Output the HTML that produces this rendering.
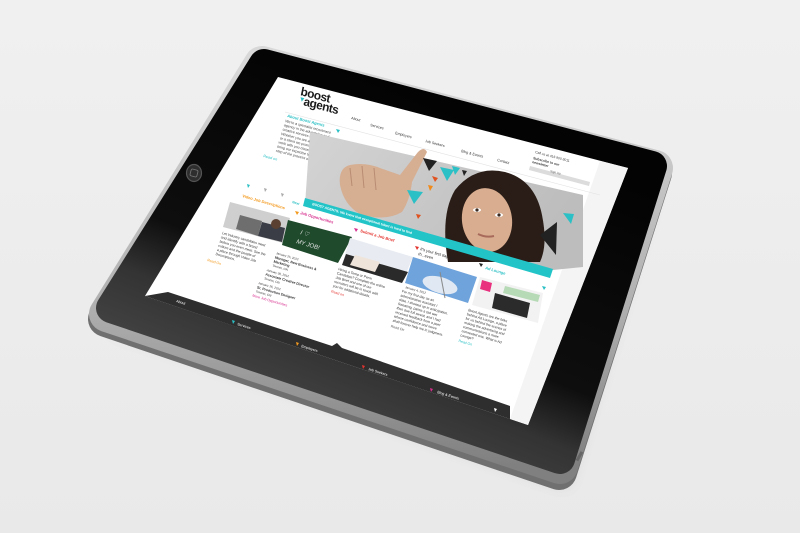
<!DOCTYPE html>
<html><head><meta charset="utf-8"><style>
html,body{margin:0;padding:0;width:800px;height:533px;overflow:hidden;background:#ededed}
svg{display:block}
text{font-family:"Liberation Sans",sans-serif}
</style></head><body>
<svg width="800" height="533" viewBox="0 0 800 533" xmlns="http://www.w3.org/2000/svg">
<defs>
<linearGradient id="bg" x1="0" y1="0" x2="0" y2="1"><stop offset="0" stop-color="#f0f0f0"/><stop offset="1" stop-color="#e9e9e9"/></linearGradient>
<linearGradient id="bez" x1="0.15" y1="0.9" x2="0.6" y2="0.1"><stop offset="0" stop-color="#4e4e4e"/><stop offset="0.3" stop-color="#333"/><stop offset="0.45" stop-color="#0e0e0e"/><stop offset="1" stop-color="#030303"/></linearGradient>
<linearGradient id="rim" x1="0" y1="0" x2="0" y2="1"><stop offset="0" stop-color="#d8d8d8"/><stop offset="0.6" stop-color="#b0b0b0"/><stop offset="1" stop-color="#808080"/></linearGradient>
<linearGradient id="hero" x1="0" y1="0" x2="1" y2="0.4"><stop offset="0" stop-color="#d4d4d4"/><stop offset="1" stop-color="#bdbdbd"/></linearGradient>
<filter id="blur"><feGaussianBlur stdDeviation="8"/></filter>
</defs>
<rect width="800" height="533" fill="url(#bg)"/>
<!-- shadow -->
<polygon points="262,70 655,175 565,478 110,322" fill="#000" opacity="0.12" filter="url(#blur)" transform="translate(2,8)"/>
<!-- tablet thickness -->
<polygon points="263,63 656,167 561,466 108,313" fill="#6a6a6a" stroke="#707070" stroke-width="36" stroke-linejoin="round" transform="translate(-2,6)"/>
<polygon points="263,62 656,166 561,464 108,312" fill="#c8c8c8" stroke="url(#rim)" stroke-width="36" stroke-linejoin="round" transform="translate(-1,2)"/>
<!-- bezel -->
<polygon points="264,64 652,166 560,459 111,308" fill="url(#bez)" stroke="url(#bez)" stroke-width="30" stroke-linejoin="round"/>
<!-- home button -->
<ellipse cx="194" cy="173" rx="7.5" ry="8.5" fill="#2e2e2e" stroke="#555" stroke-width="1.2"/>
<rect x="190.5" y="169.5" width="7" height="7" rx="1.5" fill="none" stroke="#777" stroke-width="0.8" transform="rotate(15 194 173)"/>
<!-- side buttons -->
<rect x="574" y="455" width="10" height="3" fill="#666" transform="rotate(-60 579 456)"/>
<!-- screen -->
<polygon points="278,77 628,168 528,425 145,296" fill="#ffffff"/>
<polygon points="600,161 628,168 528,425 510,419" fill="#f4f4f4"/>

<!-- logo -->
<g transform="matrix(0.967,0.254,-0.2,0.98,300,95)">
<text x="0" y="0" font-size="12" font-weight="bold" fill="#1a1a1a" letter-spacing="-0.5">boost</text>
<text x="5" y="9" font-size="12" font-weight="bold" fill="#1a1a1a" letter-spacing="-0.5">agents</text>
<polygon points="1,2 5,2 3,6" fill="#2bc0c5"/>
</g>
<!-- nav -->
<g font-size="3.6" fill="#333">
<text transform="matrix(0.967,0.254,-0.25,0.97,351,119)">About</text>
<text transform="matrix(0.967,0.254,-0.25,0.97,370,126)">Services</text>
<text transform="matrix(0.967,0.254,-0.25,0.97,395,134)">Employers</text>
<text transform="matrix(0.967,0.254,-0.25,0.97,425,142)">Job Seekers</text>
<text transform="matrix(0.967,0.254,-0.25,0.97,461,152)">Blog &amp; Events</text>
<text transform="matrix(0.967,0.254,-0.25,0.97,497,161)">Contact</text>
</g>
<line x1="285" y1="112" x2="600" y2="195" stroke="#e2e2e2" stroke-width="0.6"/>
<g font-size="3.4" fill="#444">
<text transform="matrix(0.967,0.254,-0.25,0.97,535,153)">Call us at 416 900 8011</text>
<text transform="matrix(0.967,0.254,-0.25,0.97,533,159)" font-weight="bold">Subscribe to our</text>
<text transform="matrix(0.967,0.254,-0.25,0.97,532,163)" font-weight="bold">newsletter</text>
</g>
<polygon points="530,166 590,182 589,186 529,170" fill="#dcdcdc"/>
<text transform="matrix(0.967,0.254,-0.25,0.97,550,172)" font-size="3" fill="#666">Sign Up</text>

<!-- left column -->
<text transform="matrix(0.967,0.254,-0.3,0.95,287,117)" font-size="4" font-weight="bold" fill="#2bc0c5">About Boost Agents</text>
<text transform="matrix(0.967,0.254,-0.3,0.95,285,122)" font-size="3.6" fill="#444">
<tspan x="0" dy="0">We're a specialist recruitment</tspan><tspan x="0" dy="4.4">agency in the advertising and</tspan><tspan x="0" dy="4.4">creative services industry.</tspan><tspan x="0" dy="4.8">Whether you are a candidate</tspan><tspan x="0" dy="4.4">or a client we promise to</tspan><tspan x="0" dy="4.4">work with you closely and</tspan><tspan x="0" dy="4.4">bring our expertise to every</tspan><tspan x="0" dy="4.4">step of the process with you.</tspan></text>
<text transform="matrix(0.967,0.254,-0.3,0.95,263,157)" font-size="3.8" fill="#2bc0c5">Read on</text>
<polygon points="336,129 340,130 338,133" fill="#2bc0c5"/>

<!-- hero -->
<polygon points="310,132 583,195 583,267 553,270 305,205" fill="url(#hero)"/>
<!-- hand -->
<path d="M340,185 Q338,168 350,165 Q365,162 380,168 L400,175 L418,152 Q424,146 427,152 L412,182 Q410,200 402,212 Q385,222 360,214 Q344,205 340,185 Z" fill="#d6ae92"/>
<path d="M350,168 L352,186 M362,166 L364,188 M374,168 L376,190" stroke="#b88c72" stroke-width="1" fill="none"/>
<!-- woman -->
<path d="M448,262 Q440,215 455,190 Q475,165 505,172 Q535,180 542,215 Q548,245 540,262 Z" fill="#2a1d17"/>
<ellipse cx="487" cy="220" rx="25" ry="32" fill="#d9ad90" transform="rotate(-8 487 220)"/>
<path d="M462,200 Q480,180 512,192 L510,185 Q490,172 465,185 Z" fill="#2a1d17"/>
<ellipse cx="477" cy="210" rx="4" ry="2" fill="#fff"/><circle cx="477" cy="210" r="1.6" fill="#3a2a20"/>
<ellipse cx="499" cy="215" rx="4" ry="2" fill="#fff"/><circle cx="499" cy="215" r="1.6" fill="#3a2a20"/>
<path d="M478,234 Q486,238 494,236" stroke="#a86a5a" stroke-width="2" fill="none"/>
<!-- triangles -->
<polygon points="407,190 423,192 414,204" fill="#2bc0c5"/>
<polygon points="440,167 454,170 447,181" fill="#2bc0c5"/>
<polygon points="423,158 437,161 429,171" fill="#222"/>
<polygon points="452,166 460,168 455,175" fill="#2bc0c5"/>
<polygon points="432,176 438,178 435,182" fill="#e0521f"/>
<polygon points="428,185 433,186 430,191" fill="#f08a1a"/>
<polygon points="462,170 467,171 464,176" fill="#222"/>
<polygon points="563,213 574,214 571,224" fill="#2bc0c5"/>
<polygon points="540,235 557,222 556,255" fill="#222"/>
<polygon points="416,214 421,215 418,219" fill="#e0521f"/>
<!-- teal band -->
<polygon points="305,198 553,269 550,278 303,206" fill="#22c4c8"/>
<text transform="matrix(0.96,0.28,-0.28,0.96,312,205)" font-size="3.4" font-weight="bold" fill="#fff">BOOST AGENTS: We know that exceptional talent is hard to find</text>

<!-- small nav arrows -->
<polygon points="247,184 250,185 248,188" fill="#2bc0c5"/>
<polygon points="264,188 267,189 265,192" fill="#aaa"/>
<polygon points="281,193 284,194 282,197" fill="#aaa"/>
<!-- section headings -->
<g font-size="4" font-weight="bold">
<text transform="matrix(0.96,0.28,-0.3,0.95,242,197)" fill="#f39a1e">Video Job Descriptions</text>
<text transform="matrix(0.96,0.28,-0.3,0.95,292,203)" fill="#2bc0c5" font-size="3.4">Next</text>
<text transform="matrix(0.96,0.28,-0.3,0.95,300,214)" fill="#d62f8e">Job Opportunities</text>
<text transform="matrix(0.96,0.28,-0.3,0.95,360,232)" fill="#e3342f">Submit a Job Brief</text>
<text transform="matrix(0.96,0.28,-0.3,0.95,420,250)" fill="#222" font-weight="normal">It's your first day. As</text>
<text transform="matrix(0.96,0.28,-0.3,0.95,418,255)" fill="#222" font-weight="normal">th...even</text>
<text transform="matrix(0.96,0.28,-0.3,0.95,485,269)" fill="#2bc0c5">Ad Lounge</text>
</g>
<polygon points="295,211 299,212 297,215" fill="#f39a1e"/>
<polygon points="354,228 358,229 356,232" fill="#d62f8e"/>
<polygon points="415,246 419,247 417,250" fill="#e3342f"/>
<polygon points="479,263 483,264 481,267" fill="#222"/>
<polygon points="542,286 546,287 544,290" fill="#2bc0c5"/>

<!-- photos -->
<polygon points="230,202 290,218 283,243 223,227" fill="#cfcfcf"/>
<polygon points="240,215 262,221 258,236 236,229" fill="#6e6e6e"/>
<polygon points="262,222 285,228 282,242 258,236" fill="#3a3d45"/>
<circle cx="276" cy="224" r="5" fill="#5a4030"/>
<polygon points="288,220 352,237 338,263 282,245" fill="#1f4a2c"/>
<text transform="matrix(0.96,0.28,-0.3,0.95,300,234)" font-size="6" fill="#e8e8e8" font-style="italic">I ♡</text>
<text transform="matrix(0.96,0.28,-0.3,0.95,296,243)" font-size="6" fill="#e8e8e8" font-style="italic">MY JOB!</text>
<polygon points="350,238 413,257 402,283 342,265" fill="#e8ecf2"/>
<polygon points="346,254 408,272 402,283 342,265" fill="#2a2a2a"/>
<polygon points="355,255 380,262 375,272 350,265" fill="#efe4da"/>
<polygon points="413,257 477,277 468,303 405,283" fill="#6fa3db"/>
<ellipse cx="440" cy="285" rx="18" ry="8" fill="#dfe8f3" transform="rotate(16 440 285)"/>
<line x1="440" y1="272" x2="445" y2="298" stroke="#888" stroke-width="1"/>
<polygon points="480,277 543,293 538,323 472,305" fill="#f2f2f2"/>
<polygon points="482,280 492,283 490,292 480,289" fill="#e8307e"/>
<polygon points="495,293 530,303 527,318 492,308" fill="#2b2b2b"/>
<polygon points="505,286 540,295 538,302 503,293" fill="#b6d9b6"/>

<!-- paragraphs -->
<g font-size="3.5" fill="#333">
<text transform="matrix(0.96,0.28,-0.3,0.95,222,234)"><tspan x="0" dy="0">Let Industry candidates meet</tspan><tspan x="0" dy="4.4">and identify with a brand</tspan><tspan x="0" dy="4.4">before you even meet. See the</tspan><tspan x="0" dy="4.4">culture and the people of</tspan><tspan x="0" dy="4.4">a place through Video Job</tspan><tspan x="0" dy="4.4">Descriptions.</tspan></text>
<text transform="matrix(0.96,0.28,-0.3,0.95,276,254)"><tspan x="0" dy="0" font-size="3">January 25, 2012</tspan><tspan x="0" dy="4.6" font-weight="bold">Manager, New Business &amp;</tspan><tspan x="0" dy="4.2" font-weight="bold">Marketing</tspan><tspan x="0" dy="4.2" font-size="3">Toronto, ON</tspan><tspan x="-4" dy="6" font-size="3">January 30, 2012</tspan><tspan x="-4" dy="4.6" font-weight="bold">Associate Creative Director</tspan><tspan x="-4" dy="4.2" font-size="3">Toronto, ON</tspan><tspan x="-8" dy="6" font-size="3">January 26, 2012</tspan><tspan x="-8" dy="4.6" font-weight="bold">Sr. Production Designer</tspan><tspan x="-8" dy="4.2" font-size="3">Toronto, ON</tspan><tspan x="-10" dy="5" fill="#d62f8e">More Job Opportunities</tspan></text>
<text transform="matrix(0.96,0.28,-0.3,0.95,338,270)"><tspan x="0" dy="0">Hiring a Temp or Perm</tspan><tspan x="0" dy="4.4">Candidate? Complete the online</tspan><tspan x="0" dy="4.4">Job Brief and one of our</tspan><tspan x="0" dy="4.4">recruiters will be in touch with</tspan><tspan x="0" dy="4.4">you for additional details.</tspan><tspan x="0" dy="6" fill="#e3342f">Read on</tspan></text>
<text transform="matrix(0.96,0.28,-0.3,0.95,405,288)"><tspan x="0" dy="0" font-size="3">January 4, 2012</tspan><tspan x="-2" dy="5">For my first day as an</tspan><tspan x="-2" dy="4.4">administrative assistant /</tspan><tspan x="-2" dy="4.4">data, I showed up in anticipation.</tspan><tspan x="-2" dy="4.4">Sweating, palms a tad wet</tspan><tspan x="-2" dy="4.4">then due full sweat, and I had</tspan><tspan x="-2" dy="4.4">received feedback from a peer</tspan><tspan x="-2" dy="4.4">whose confidence and nerve</tspan><tspan x="-2" dy="4.4">shall forever help me in judgment.</tspan><tspan x="-2" dy="6" fill="#555">Read On</tspan></text>
<text transform="matrix(0.96,0.28,-0.3,0.95,468,311)"><tspan x="0" dy="0">Boost Agents are the folks</tspan><tspan x="0" dy="4.4">behind Ad Lounge, a place</tspan><tspan x="0" dy="4.4">for us behind the scenes of</tspan><tspan x="0" dy="4.4">making the advertising and</tspan><tspan x="0" dy="4.4">communications a more</tspan><tspan x="0" dy="4.4">connected one. What is Ad</tspan><tspan x="0" dy="4.4">Lounge?</tspan><tspan x="0" dy="6" fill="#2bc0c5">Read On</tspan></text>
</g>
<text transform="matrix(0.96,0.28,-0.3,0.95,207,261)" font-size="3.6" fill="#f39a1e">Read On</text>

<!-- bottom bar -->
<polygon points="168,292 332,346 337,343 342,348 510,406 510,419 145,296" fill="#2e2e2e"/>
<g font-size="3.6" fill="#fff">
<text transform="matrix(0.96,0.3,-0.3,0.95,176,302)">About</text>
<text transform="matrix(0.96,0.3,-0.3,0.95,237,325)">Services</text>
<text transform="matrix(0.96,0.3,-0.3,0.95,301,347)">Employers</text>
<text transform="matrix(0.96,0.3,-0.3,0.95,368,370)">Job Seekers</text>
<text transform="matrix(0.96,0.3,-0.3,0.95,437,393)">Blog &amp; Events</text>
</g>
<polygon points="232,320 235,321 233,324" fill="#2bc0c5"/>
<polygon points="296,342 299,343 297,346" fill="#f39a1e"/>
<polygon points="362,365 365,366 363,369" fill="#e3342f"/>
<polygon points="430,388 433,389 431,392" fill="#d62f8e"/>
<polygon points="494,408 497,409 495,412" fill="#fff"/>
</svg>
</body></html>
